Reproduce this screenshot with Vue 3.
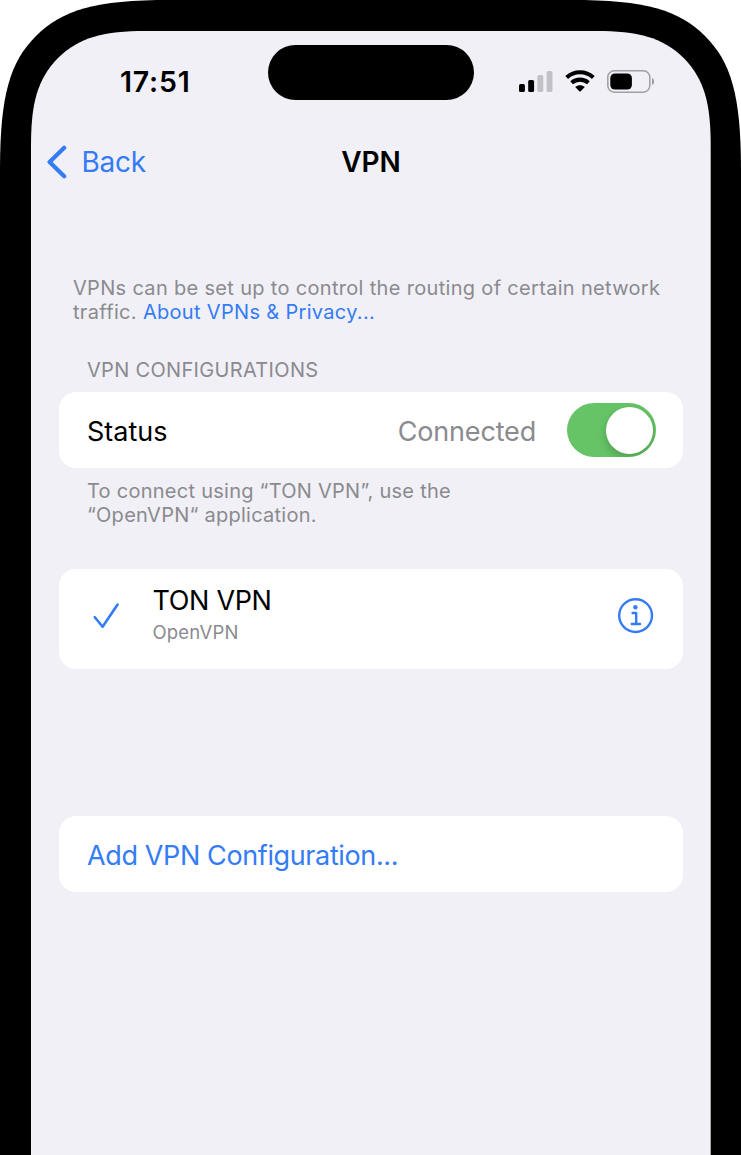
<script setup>
const signal = [
  { x: 0, y: 13, h: 8, on: true },
  { x: 9.2, y: 9, h: 12, on: true },
  { x: 18.4, y: 4, h: 17, on: false },
  { x: 27.6, y: 0, h: 21, on: false },
]
</script>

<template>
  <div class="phone">
    <svg class="bezel" viewBox="0 0 741 1155" aria-hidden="true">
      <path d="M0 1155V170C0 95 10 62 36 36C62 10 95 0 170 0H571C646 0 679 10 705 36C731 62 741 95 741 170V1155Z" fill="#000" />
      <path d="M31 1155V146C31 104 37 79.5 58 58C79.5 37 104 31 146 31H595.7C637.7 31 662.2 37 683.7 58C704.7 79.5 710.7 104 710.7 146V1155Z" fill="#f1f0f6" />
    </svg>

    <main class="screen">
      <header class="status-bar">
        <time class="clock">17:51</time>
        <div class="island"></div>
        <div class="indicators">
          <svg class="signal" width="34" height="22" viewBox="0 0 34 22">
            <rect v-for="b in signal" :key="b.x" :x="b.x" :y="b.y" width="5.9" :height="b.h" rx="1.6" :fill="b.on ? '#000' : '#c2c1c7'" />
          </svg>
          <svg class="wifi" width="30" height="22" viewBox="0 0 30 22">
            <g fill="none" stroke="#000" stroke-width="4.1">
              <path d="M1.7 7.4C9.2 .5 20.8 .5 28.3 7.4" />
              <path d="M6.6 12.8C11.4 8.5 18.6 8.5 23.4 12.8" />
            </g>
            <path d="M10.2 17C13 14.6 17 14.6 19.8 17L15.7 21.2Q15 21.9 14.3 21.2Z" fill="#000" />
          </svg>
          <svg class="battery" width="48" height="23" viewBox="0 0 48 23">
            <rect x=".8" y=".8" width="42" height="21.4" rx="6.4" fill="none" stroke="#a09fa5" stroke-width="1.5" />
            <rect x="3.3" y="3.5" width="21.6" height="16" rx="4.6" fill="#000" />
            <path d="M45 8C47.8 9 47.8 14 45 15Z" fill="#9d9ca2" />
          </svg>
        </div>
      </header>

      <nav class="nav">
        <a class="back">
          <svg width="20" height="34" viewBox="0 0 20 34">
            <path d="M17.2 2.8L2.6 17L17.2 31.2" fill="none" stroke="#347bf6" stroke-width="4.2" stroke-linecap="round" stroke-linejoin="round" />
          </svg>
          <span>Back</span>
        </a>
        <h1>VPN</h1>
      </nav>

      <p class="intro">VPNs can be set up to control the routing of certain network<br />traffic. <a>About VPNs &amp; Privacy...</a></p>

      <h2>VPN CONFIGURATIONS</h2>
      <section class="card row">
        <span class="label">Status</span>
        <span class="value">Connected</span>
        <span class="toggle"><i></i></span>
      </section>
      <p class="hint">To connect using “TON VPN”, use the<br />“OpenVPN“ application.</p>

      <section class="card config">
        <svg class="check" width="28" height="28" viewBox="0 0 28 28">
          <path d="M2.8 15.2L10.6 24.8L25.6 2.5" fill="none" stroke="#347bf6" stroke-width="2.6" stroke-linecap="round" stroke-linejoin="round" />
        </svg>
        <div class="names">
          <span class="label ton">TON VPN</span>
          <span class="kind">OpenVPN</span>
        </div>
        <svg class="info" width="36" height="36" viewBox="0 0 36 36" fill="none" stroke="#347bf6">
          <circle cx="17.6" cy="17.6" r="16.4" stroke-width="2.4" />
          <circle cx="17.4" cy="9.2" r="2.2" fill="#347bf6" stroke="none" />
          <path d="M14.6 15H18.2V26M13.8 26H22" stroke-width="2.4" stroke-linecap="round" stroke-linejoin="round" />
        </svg>
      </section>

      <section class="card row add">
        <a>Add VPN Configuration...</a>
      </section>
    </main>
  </div>
</template>

<style>
body { margin: 0; background: #fff; }
</style>

<style scoped>
.phone {
  position: relative;
  width: 741px;
  height: 1155px;
  overflow: hidden;
  font-family: Inter, "Liberation Sans", sans-serif;
  color: #000;
}
.bezel { position: absolute; inset: 0; width: 741px; height: 1155px; }
.screen {
  position: relative;
  box-sizing: border-box;
  height: 1155px;
  padding: 45px 58px 0 59px;
}
h1, h2, p { margin: 0; font-weight: 400; }
a { color: #347bf6; }
span, a, h2, p, time { white-space: nowrap; }

.status-bar {
  display: grid;
  grid-template-columns: 209px 206px 1fr;
  height: 55px;
}
.clock {
  padding: 20px 0 0 61px;
  font-size: 28.5px;
  line-height: 34px;
  font-weight: 600;
  letter-spacing: .8px;
}
.island { height: 55px; border-radius: 28px; background: #000; }
.indicators { display: flex; align-items: flex-start; padding: 25px 0 0 45px; }
.signal { margin-top: 1px; }
.wifi { margin: 0 0 0 12px; }
.battery { margin-left: 12px; }

.nav {
  display: grid;
  grid-template-columns: 1fr auto 1fr;
  align-items: center;
  height: 40px;
  margin: 42px 0 0 -12px;
  width: 648px;
}
.back { display: flex; align-items: center; gap: 14.5px; font-size: 28px; letter-spacing: -.25px; }
h1 { font-size: 28px; font-weight: 600; }

.intro, .hint, h2 { font-size: 20px; line-height: 24px; color: #8a8a8f; letter-spacing: .32px; }
.intro { margin: 94px 0 0 14px; }
h2 { margin: 34px 0 0 28px; }

.card { display: flex; box-sizing: border-box; width: 624px; border-radius: 17px; background: #fff; }
.row { align-items: center; height: 76px; margin-top: 10px; padding: 0 27px 0 28px; }
.label, .value, .add { font-size: 27px; line-height: 34px; }
.row .label, .value, .add a { padding-top: 4px; }
.value { margin-left: auto; color: #8a8a8f; letter-spacing: -.17px; }
.toggle {
  display: flex;
  justify-content: flex-end;
  box-sizing: border-box;
  width: 89px;
  height: 54px;
  margin-left: 31px;
  padding: 3.5px;
  border-radius: 27px;
  background: #66c466;
  overflow: hidden;
}
.toggle i { width: 47px; height: 47px; border-radius: 50%; background: #fff; box-shadow: 0 4px 10px rgba(0, 0, 0, .2); }

.hint { margin: 11px 0 0 28px; letter-spacing: .26px; }

.config { height: 100px; margin-top: 42px; padding: 0 29px 0 33px; }
.check { margin-top: 33px; }
.names { display: flex; flex-direction: column; margin: 15px 0 0 32.5px; }
.ton { letter-spacing: -.33px; }
.kind { margin-top: 2px; font-size: 18.5px; line-height: 24px; color: #8a8a8f; letter-spacing: .2px; }
.info { margin: 29px 0 0 auto; }
.add { margin-top: 147px; letter-spacing: -.38px; }
</style>
